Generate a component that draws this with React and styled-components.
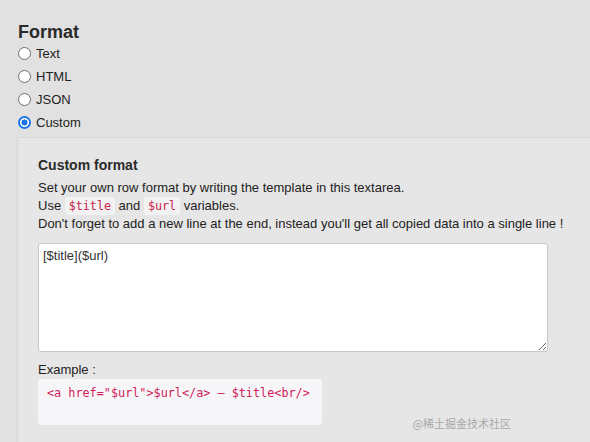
import React from "react";
import styled, { createGlobalStyle } from "styled-components";

const Global = createGlobalStyle`
  html, body {
    margin: 0;
    padding: 0;
    background: #e1e1e1;
  }
  body {
    font-family: "Liberation Sans", Arial, sans-serif;
    color: #222;
    font-size: 13px;
  }
`;

const Page = styled.div`
  width: 590px;
  height: 442px;
  overflow: hidden;
  padding-top: 22px;
  box-sizing: border-box;
  position: relative;
`;

const Title = styled.h2`
  margin: 0 0 0 18px;
  font-size: 18px;
  line-height: 20px;
  font-weight: 700;
  color: #2a2a2a;
`;

const Options = styled.div`
  display: flex;
  flex-direction: column;
  margin: 0 0 0 18px;
`;

const Option = styled.label`
  display: flex;
  align-items: center;
  height: 23px;
  gap: 5px;
  font-size: 13px;
  color: #222;
`;

const Radio = styled.span`
  width: 13px;
  height: 13px;
  box-sizing: border-box;
  border-radius: 50%;
  flex: none;
  ${(p) =>
    p.checked
      ? `background: radial-gradient(circle, #1a73e8 0 2.8px, #fff 3.3px 4.2px, #1a73e8 4.7px);`
      : `background: #fff; border: 1px solid #6e6e6e;`}
`;

const Panel = styled.div`
  margin: 3px 0 0 17px;
  background: #e6e6e6;
  border-left: 1px solid #d6d6d6;
  border-top: 1px solid #d9d9d9;
  padding: 18px 0 20px 20px;
`;

const SubTitle = styled.h3`
  margin: 0 0 5px;
  font-size: 14px;
  line-height: 18px;
  font-weight: 700;
  color: #2a2a2a;
`;

const Para = styled.p`
  margin: 0;
  font-size: 13px;
  line-height: 18px;
  color: #222;
`;

const Code = styled.code`
  font-family: "DejaVu Sans Mono", Menlo, monospace;
  font-size: 11.7px;
  color: #c7254e;
  background: #f2f2f2;
  padding: 2px 4px;
  border-radius: 3px;
`;

const Area = styled.textarea`
  display: block;
  margin-top: 10px;
  width: 510px;
  height: 109px;
  box-sizing: border-box;
  border: 1px solid #c8c8c8;
  border-radius: 3px;
  background: #fff;
  font-family: "Liberation Sans", Arial, sans-serif;
  font-size: 13px;
  color: #333;
  padding: 4px 4px;
  resize: both;
`;

const Label = styled.div`
  margin-top: 10px;
  font-size: 13px;
  line-height: 16px;
  color: #222;
`;

const Pre = styled.pre`
  margin: 1px 0 0;
  width: 284px;
  height: 46px;
  box-sizing: border-box;
  background: #f6f6f8;
  border-radius: 3px;
  padding: 7px 9px 5px;
  font-family: "DejaVu Sans Mono", Menlo, monospace;
  font-size: 11.8px;
  line-height: 14px;
  color: #d01c5b;
`;

const Watermark = styled.div`
  position: absolute;
  right: 79px;
  bottom: 11px;
  font-family: "Noto Sans CJK SC", sans-serif;
  font-size: 11px;
  color: #a8a8a8;
`;

const formats = ["Text", "HTML", "JSON", "Custom"];

const App = () => {
  return (
    <Page>
      <Global />
      <Title>Format</Title>
      <Options>
        {formats.map((f) => (
          <Option key={f}>
            <Radio checked={f === "Custom"} />
            {f}
          </Option>
        ))}
      </Options>
      <Panel>
        <SubTitle>Custom format</SubTitle>
        <Para>Set your own row format by writing the template in this textarea.</Para>
        <Para>
          Use <Code>$title</Code> and <Code>$url</Code> variables.
        </Para>
        <Para>
          Don't forget to add a new line at the end, instead you'll get all copied data into a single line !
        </Para>
        <Area defaultValue="[$title]($url)" />
        <Label>Example :</Label>
        <Pre>{'<a href="$url">$url</a> – $title<br/>'}</Pre>
      </Panel>
      <Watermark>@稀土掘金技术社区</Watermark>
    </Page>
  );
};

export default App;
